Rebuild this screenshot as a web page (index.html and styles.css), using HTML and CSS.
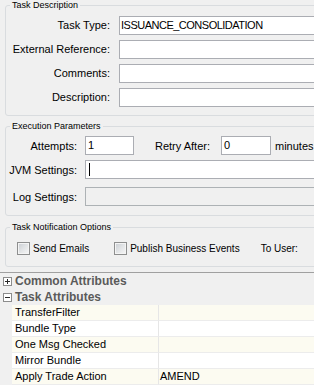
FILE: index.html
```html
<!DOCTYPE html>
<html>
<head>
<meta charset="utf-8">
<title>Task</title>
<link rel="stylesheet" href="styles.css">
</head>
<body>
<div class="page">
  <fieldset class="group g1">
    <legend>Task Description</legend>
    <div class="form1">
      <label class="lbl1">Task Type:</label>
      <div class="input wide"><span class="val tight">ISSUANCE_CONSOLIDATION</span></div>
      <label class="lbl1">External Reference:</label>
      <div class="input wide"></div>
      <label class="lbl1">Comments:</label>
      <div class="input wide"></div>
      <label class="lbl1">Description:</label>
      <div class="input wide"></div>
    </div>
  </fieldset>

  <fieldset class="group g2">
    <legend>Execution Parameters</legend>
    <div class="row r-attempts">
      <label class="lbl2">Attempts:</label>
      <div class="input attempts"><span class="val">1</span></div>
      <label class="retry">Retry After:</label>
      <div class="input retryin"><span class="val">0</span></div>
      <span class="unit">minutes</span>
    </div>
    <div class="row r-jvm">
      <label class="lbl2">JVM Settings:</label>
      <div class="input long"><span class="caret"></span></div>
    </div>
    <div class="row r-log">
      <label class="lbl2">Log Settings:</label>
      <div class="input long disabled"></div>
    </div>
  </fieldset>

  <fieldset class="group g3">
    <legend>Task Notification Options</legend>
    <div class="cbrow">
      <span class="cb"><span class="box"></span><span class="cbl">Send Emails</span></span>
      <span class="cb cb2"><span class="box"></span><span class="cbl">Publish Business Events</span></span>
      <span class="touser">To User:</span>
    </div>
  </fieldset>

  <div class="pgrid">
    <div class="cat">
      <svg class="exp" width="9" height="9" viewBox="0 0 9 9"><rect x="0.5" y="0.5" width="8" height="8" fill="#fff" stroke="#8c8c8c"/><path d="M2 4.5h5M4.5 2v5" stroke="#2a2a2a" stroke-width="1"/></svg>
      <span>Common Attributes</span>
    </div>
    <div class="cat">
      <svg class="exp" width="9" height="9" viewBox="0 0 9 9"><rect x="0.5" y="0.5" width="8" height="8" fill="#fff" stroke="#8c8c8c"/><path d="M2 4.5h5" stroke="#2a2a2a" stroke-width="1"/></svg>
      <span>Task Attributes</span>
    </div>
    <div class="prow odd"><span class="gut"></span><span class="name">TransferFilter</span><span class="value"></span></div>
    <div class="prow"><span class="gut"></span><span class="name">Bundle Type</span><span class="value"></span></div>
    <div class="prow odd"><span class="gut"></span><span class="name">One Msg Checked</span><span class="value"></span></div>
    <div class="prow"><span class="gut"></span><span class="name">Mirror Bundle</span><span class="value"></span></div>
    <div class="prow odd"><span class="gut"></span><span class="name">Apply Trade Action</span><span class="value">AMEND</span></div>
  </div>
</div>
</body>
</html>
```

FILE: styles.css
```css
html, body {
  margin: 0;
  padding: 0;
}
body {
  background: #f0f0f0;
  font-family: "Liberation Sans", Arial, sans-serif;
  font-size: 11px;
  color: #000;
  width: 314px;
  height: 385px;
  overflow: hidden;
}
.page {
  width: 314px;
  height: 385px;
  overflow: hidden;
}
.group {
  margin: 0 0 0 5px;
  padding: 0;
  border: 1px solid #d9dcdf;
  border-radius: 3px;
  width: 360px;
  min-width: 0;
  box-sizing: border-box;
}
.group legend {
  font-size: 9px;
  line-height: 11px;
  padding: 0 2px;
  margin-left: 4px;
  color: #000;
}
.input {
  box-sizing: border-box;
  height: 19px;
  border: 1px solid #abadb3;
  background: #fff;
  display: flex;
  align-items: center;
}
.val {
  padding-left: 2px;
  line-height: 17px;
}
.tight {
  padding-left: 1px;
  letter-spacing: -0.5px;
}
/* group 1 */
.form1 {
  display: grid;
  grid-template-columns: 104px 240px;
  column-gap: 9px;
  row-gap: 5px;
  padding: 5px 0 8px 0;
}
.lbl1 {
  text-align: right;
  line-height: 19px;
}
/* group 2 */
.g2 {
  margin-top: 5px;
  padding: 4px 0 9px 0;
}
.row {
  display: flex;
  align-items: center;
  height: 19px;
}
.r-jvm { margin-top: 5px; }
.r-log { margin-top: 8px; }
.lbl2 {
  width: 71px;
  text-align: right;
  margin-right: 8px;
  flex: none;
}
.attempts { width: 49px; flex: none; }
.retry {
  margin-left: 21px;
  width: 57px;
  margin-right: 9px;
  flex: none;
}
.retryin { width: 50px; flex: none; }
.unit { margin-left: 4px; flex: none; }
.long { width: 260px; flex: none; }
.disabled { background: #f0f0f0; border-color: #adb2b5; }
.caret {
  display: block;
  width: 1px;
  height: 13px;
  margin-left: 3px;
  background: #000;
}
/* group 3 */
.g3 {
  margin-top: 6px;
  padding: 8px 0 10px 0;
}
.cbrow {
  display: flex;
  align-items: center;
  height: 15px;
  font-size: 10px;
  padding-left: 11px;
}
.cb {
  display: flex;
  align-items: center;
  flex: none;
}
.cb2 { margin-left: 25px; }
.box {
  box-sizing: border-box;
  width: 13px;
  height: 13px;
  border: 1px solid #8e8f8f;
  background: linear-gradient(135deg, #c9cdd2 0%, #e2e4e6 50%, #f7f7f7 100%);
  box-shadow: inset 0 0 0 1px #f4f4f4;
  margin-right: 3px;
}
.touser { margin-left: 21px; flex: none; }
/* property grid */
.pgrid {
  margin-top: 5px;
  border-top: 1px solid #a0a0a0;
}
.cat {
  display: flex;
  align-items: center;
  height: 16px;
  background: #f0f0f0;
  font-weight: bold;
  font-size: 12px;
  color: #5a5a5a;
}
.exp {
  margin: 0 3px 0 3px;
  flex: none;
}
.prow {
  display: flex;
  height: 16px;
  font-family: "Liberation Sans Narrow", "Liberation Sans", Arial, sans-serif;
  font-size: 11px;
  background: #fff;
}
.prow.odd .name, .prow.odd .value { background: #fcfbf1; }
.gut {
  width: 12px;
  flex: none;
  background: #f0f0f0;
}
.name {
  box-sizing: border-box;
  width: 147px;
  flex: none;
  padding-left: 3px;
  line-height: 15px;
  border-right: 1px solid #e6e6e6;
  border-bottom: 1px solid #ececec;
}
.value {
  flex: 1;
  padding-left: 1px;
  line-height: 15px;
  border-bottom: 1px solid #ececec;
}
```
